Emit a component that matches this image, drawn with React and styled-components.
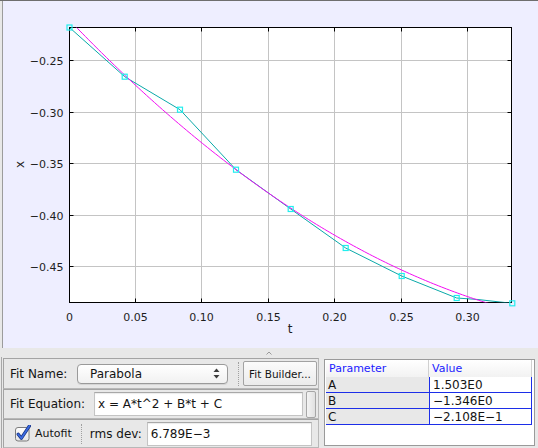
import React from 'react';
import styled, { createGlobalStyle } from 'styled-components';

const GlobalStyle = createGlobalStyle`
  html, body { margin: 0; padding: 0; }
  body { font-family: "DejaVu Sans", sans-serif; background: #e8e8e8; color: #141414; }
`;

const Window = styled.div`
  width: 538px;
  height: 448px;
  box-sizing: border-box;
  border-top: 1px solid #6e6e6e;
  background: #e8e8e8;
  display: flex;
  flex-direction: column;
  overflow: hidden;
`;

const PlotPanel = styled.div`
  flex: none;
  height: 347px;
  margin-left: 2px;
  border-left: 1px solid #9c9c9c;
  background: #eeeeff;
  svg { display: block; }
`;

const Splitter = styled.div`
  flex: none;
  height: 9px;
  display: flex;
  justify-content: center;
  align-items: center;
`;

const Bottom = styled.div`
  flex: 1;
  display: flex;
  margin-left: 1px;
  border-left: 1px solid #a8a8a8;
  padding: 1px 0 0 1px;
`;

const Form = styled.div`
  width: 316px;
  display: flex;
  flex-direction: column;
`;

const Row = styled.div`
  height: ${p => p.h}px;
  box-sizing: border-box;
  border: 1px solid #b8b8b8;
  border-top-color: #a4a4a4;
  border-left-color: #a4a4a4;
  display: flex;
  align-items: center;
  padding-left: 6px;
`;

const Label = styled.span`
  flex: none;
  width: ${p => (p.w ? `${p.w}px` : 'auto')};
  margin-left: ${p => p.ml || 0}px;
  font-size: ${p => p.size || 12}px;
  white-space: nowrap;
`;

const Dropdown = styled.div`
  width: 151px;
  height: 20px;
  box-sizing: border-box;
  border: 1px solid #9a9a9a;
  border-radius: 4px;
  background: linear-gradient(#ffffff, #f1f1f1);
  box-shadow: 0 1px 0 rgba(0, 0, 0, 0.08);
  display: flex;
  align-items: center;
  justify-content: space-between;
  padding: 0 7px 0 12px;
  font-size: 12px;
`;

const Separator = styled.div`
  flex: none;
  height: ${p => p.h}px;
  margin: 0 ${p => p.mr}px 0 ${p => p.ml}px;
  border-left: 1px dotted #a0a0a0;
`;

const Button = styled.div`
  width: 74px;
  height: 25px;
  box-sizing: border-box;
  border: 1px solid #a2a2a2;
  border-radius: 2px;
  background: linear-gradient(#fbfbfb, #ebebeb);
  display: flex;
  align-items: center;
  justify-content: center;
  font-size: 10.5px;
  white-space: nowrap;
`;

const Field = styled.div`
  flex: none;
  width: ${p => p.w}px;
  height: 24px;
  box-sizing: border-box;
  margin-left: ${p => p.ml || 0}px;
  border: 1px solid #c4c4c4;
  border-top-color: #a8a8a8;
  box-shadow: inset 0 1px 1px rgba(0, 0, 0, 0.08);
  background: #fff;
  display: flex;
  align-items: center;
  padding-left: 3px;
  font-size: 12px;
  white-space: nowrap;
`;

const SideBox = styled.div`
  width: 10px;
  height: 27px;
  margin-left: 3px;
  box-sizing: border-box;
  border: 1px solid #a6a6a6;
  border-radius: 2px;
  background: linear-gradient(90deg, #f4f4f4, #e0e0e0);
`;

const Check = styled.div`
  flex: none;
  margin-left: 5px;
  width: 16px;
  height: 17px;
  svg { display: block; }
`;

const Table = styled.div`
  margin: 1px 0 0 5px;
  width: 211px;
  height: 87px;
  box-sizing: border-box;
  border: 1px solid #9a9a9a;
  background: #fff;
  padding-left: 1px;
  display: grid;
  grid-template-columns: 103px 103px;
  grid-auto-rows: 16px;
  grid-template-rows: 17px;
  align-content: start;
  font-size: 12px;
`;

const HeadCell = styled.div`
  color: #1b1bff;
  font-size: 11px;
  padding-left: 3px;
  display: flex;
  align-items: center;
  background: linear-gradient(#ffffff, #f2f2f2);
  border-right: 1px solid #d0d0d0;
  box-sizing: border-box;
`;

const Cell = styled.div`
  box-sizing: border-box;
  display: flex;
  align-items: center;
  padding-left: ${p => (p.value ? 3 : 2)}px;
  background: ${p => (p.value ? '#fff' : '#e8e8e8')};
  border-bottom: 1px solid #1c2ee8;
  border-left: ${p => (p.value ? '1px solid #1c2ee8' : 'none')};
  border-right: ${p => (p.value ? '1px solid #1c2ee8' : 'none')};
  white-space: nowrap;
`;

// chart mapping, page pixel coordinates
const X = t => 69 + (t / 0.05) * 66.4;
const Y = v => 60 + ((-0.25 - v) / 0.05) * 51.5;

const xTicks = ['0', '0.05', '0.10', '0.15', '0.20', '0.25', '0.30'];
const yTicks = ['−0.25', '−0.30', '−0.35', '−0.40', '−0.45'];

const dataPts = [
  [69.5, 27.5], [124.7, 76.7], [180, 109.7], [236, 169.7], [290.7, 209],
  [345.7, 248], [401.7, 276], [456.7, 298], [512.3, 303.3],
];
const cyanLine = [...dataPts.slice(0, 8), [478, 299.5], [500, 302], [512.3, 303.3]];

const fit = [];
for (let t = 0; t <= 0.34; t += 0.002) {
  const v = 1.503 * t * t - 1.346 * t - 0.2108;
  fit.push(`${(X(t) + 0.5).toFixed(2)},${(Y(v) + 0.5).toFixed(2)}`);
}

const Chart = () => (
  <svg width="535" height="347" viewBox="3 1 535 347" fontFamily="DejaVu Sans, sans-serif">
    <defs>
      <clipPath id="frame">
        <rect x="69.5" y="27.5" width="442" height="275" />
      </clipPath>
    </defs>
    <rect x="69.5" y="27.5" width="442" height="275" fill="#fff" />
    {xTicks.map((_, k) => {
      const x = Math.floor(69 + k * 66.4) + 0.5;
      return <line key={k} x1={x} x2={x} y1="27.5" y2="302.5" stroke="#c4c4c4" />;
    })}
    {yTicks.map((_, k) => {
      const y = Math.round(60 + k * 51.5) + 0.5;
      return <line key={k} x1="69.5" x2="511.5" y1={y} y2={y} stroke="#c4c4c4" />;
    })}
    <rect x="69.5" y="27.5" width="442" height="275" fill="none" stroke="#000" />
    {xTicks.map((_, k) => {
      const x = Math.floor(69 + k * 66.4) + 0.5;
      return (
        <g key={k} stroke="#000">
          <line x1={x} x2={x} y1="27.5" y2="31.5" />
          <line x1={x} x2={x} y1="298.5" y2="302.5" />
        </g>
      );
    })}
    {yTicks.map((_, k) => {
      const y = Math.round(60 + k * 51.5) + 0.5;
      return (
        <g key={k} stroke="#000">
          <line x1="69.5" x2="73.5" y1={y} y2={y} />
          <line x1="507.5" x2="511.5" y1={y} y2={y} />
        </g>
      );
    })}
    <g clipPath="url(#frame)" fill="none" strokeWidth="1">
      <polyline points={cyanLine.map(p => p.join(',')).join(' ')} stroke="#0aa9a9" />
      <polyline points={fit.join(' ')} stroke="#f20cf2" />
    </g>
    {dataPts.map(([x, y], i) => (
      <rect key={i} x={x - 2.5} y={y - 2.5} width="5" height="5" fill="none" stroke="#22eeee" strokeWidth="1.2" />
    ))}
    <g fontSize="11" fill="#1e1e1e">
      {xTicks.map((s, k) => (
        <text key={s} x={Math.floor(69 + k * 66.4) + 0.5} y="320.5" textAnchor="middle">{s}</text>
      ))}
      {yTicks.map((s, k) => (
        <text key={s} x="63.5" y={Math.round(60 + k * 51.5) + 4.5} textAnchor="end">{s}</text>
      ))}
    </g>
    <text x="290" y="332.5" fontSize="12" textAnchor="middle" fill="#1e1e1e">t</text>
    <text x="0" y="0" fontSize="12" textAnchor="middle" fill="#1e1e1e" transform="translate(23.5 164.5) rotate(-90)">x</text>
  </svg>
);

const UpDown = () => (
  <svg width="7" height="11" viewBox="0 0 7 11">
    <path d="M3.5 0.5 L6.5 4 L0.5 4 Z" fill="#3c3c3c" />
    <path d="M3.5 10.5 L6.5 7 L0.5 7 Z" fill="#3c3c3c" />
  </svg>
);

const CheckMark = () => (
  <svg width="16" height="17" viewBox="0 0 16 17">
    <rect x="0.5" y="2.5" width="13.5" height="13.5" rx="2.5" fill="url(#cbg)" stroke="#7c7c7c" />
    <defs>
      <linearGradient id="cbg" x1="0" y1="0" x2="0" y2="1">
        <stop offset="0" stopColor="#ffffff" />
        <stop offset="1" stopColor="#e4e4e4" />
      </linearGradient>
    </defs>
    <path d="M3.2 9.2 L6.4 13.2 L14.5 0.8" fill="none" stroke="#16307e" strokeWidth="3.2" strokeLinecap="round" strokeLinejoin="round" />
    <path d="M3.2 9.2 L6.4 13.2 L14.5 0.8" fill="none" stroke="#3b6be0" strokeWidth="1.8" strokeLinecap="round" strokeLinejoin="round" />
  </svg>
);

const params = [
  ['A', '1.503E0'],
  ['B', '−1.346E0'],
  ['C', '−2.108E−1'],
];

export default function App() {
  return (
    <>
      <GlobalStyle />
      <Window>
        <PlotPanel>
          <Chart />
        </PlotPanel>
        <Splitter>
          <svg width="6" height="4" viewBox="0 0 6 4">
            <polyline points="0.5,3.5 3,1 5.5,3.5" fill="none" stroke="#9a9a9a" />
          </svg>
        </Splitter>
        <Bottom>
          <Form>
            <Row h={31}>
              <Label w={67}>Fit Name:</Label>
              <Dropdown>
                <span>Parabola</span>
                <UpDown />
              </Dropdown>
              <Separator h={24} ml={10} mr={4} />
              <Button>Fit Builder...</Button>
            </Row>
            <Row h={30}>
              <Label w={84}>Fit Equation:</Label>
              <Field w={209}>x = A*t^2 + B*t + C</Field>
              <SideBox />
            </Row>
            <Row h={29}>
              <Check>
                <CheckMark />
              </Check>
              <Label size={11} ml={4}>Autofit</Label>
              <Separator h={20} ml={9} mr={0} />
              <Label ml={8}>rms dev:</Label>
              <Field w={165} ml={5}>6.789E−3</Field>
            </Row>
          </Form>
          <Table>
            <HeadCell>Parameter</HeadCell>
            <HeadCell>Value</HeadCell>
            {params.map(([n, v]) => (
              <React.Fragment key={n}>
                <Cell>{n}</Cell>
                <Cell value>{v}</Cell>
              </React.Fragment>
            ))}
          </Table>
        </Bottom>
      </Window>
    </>
  );
}
